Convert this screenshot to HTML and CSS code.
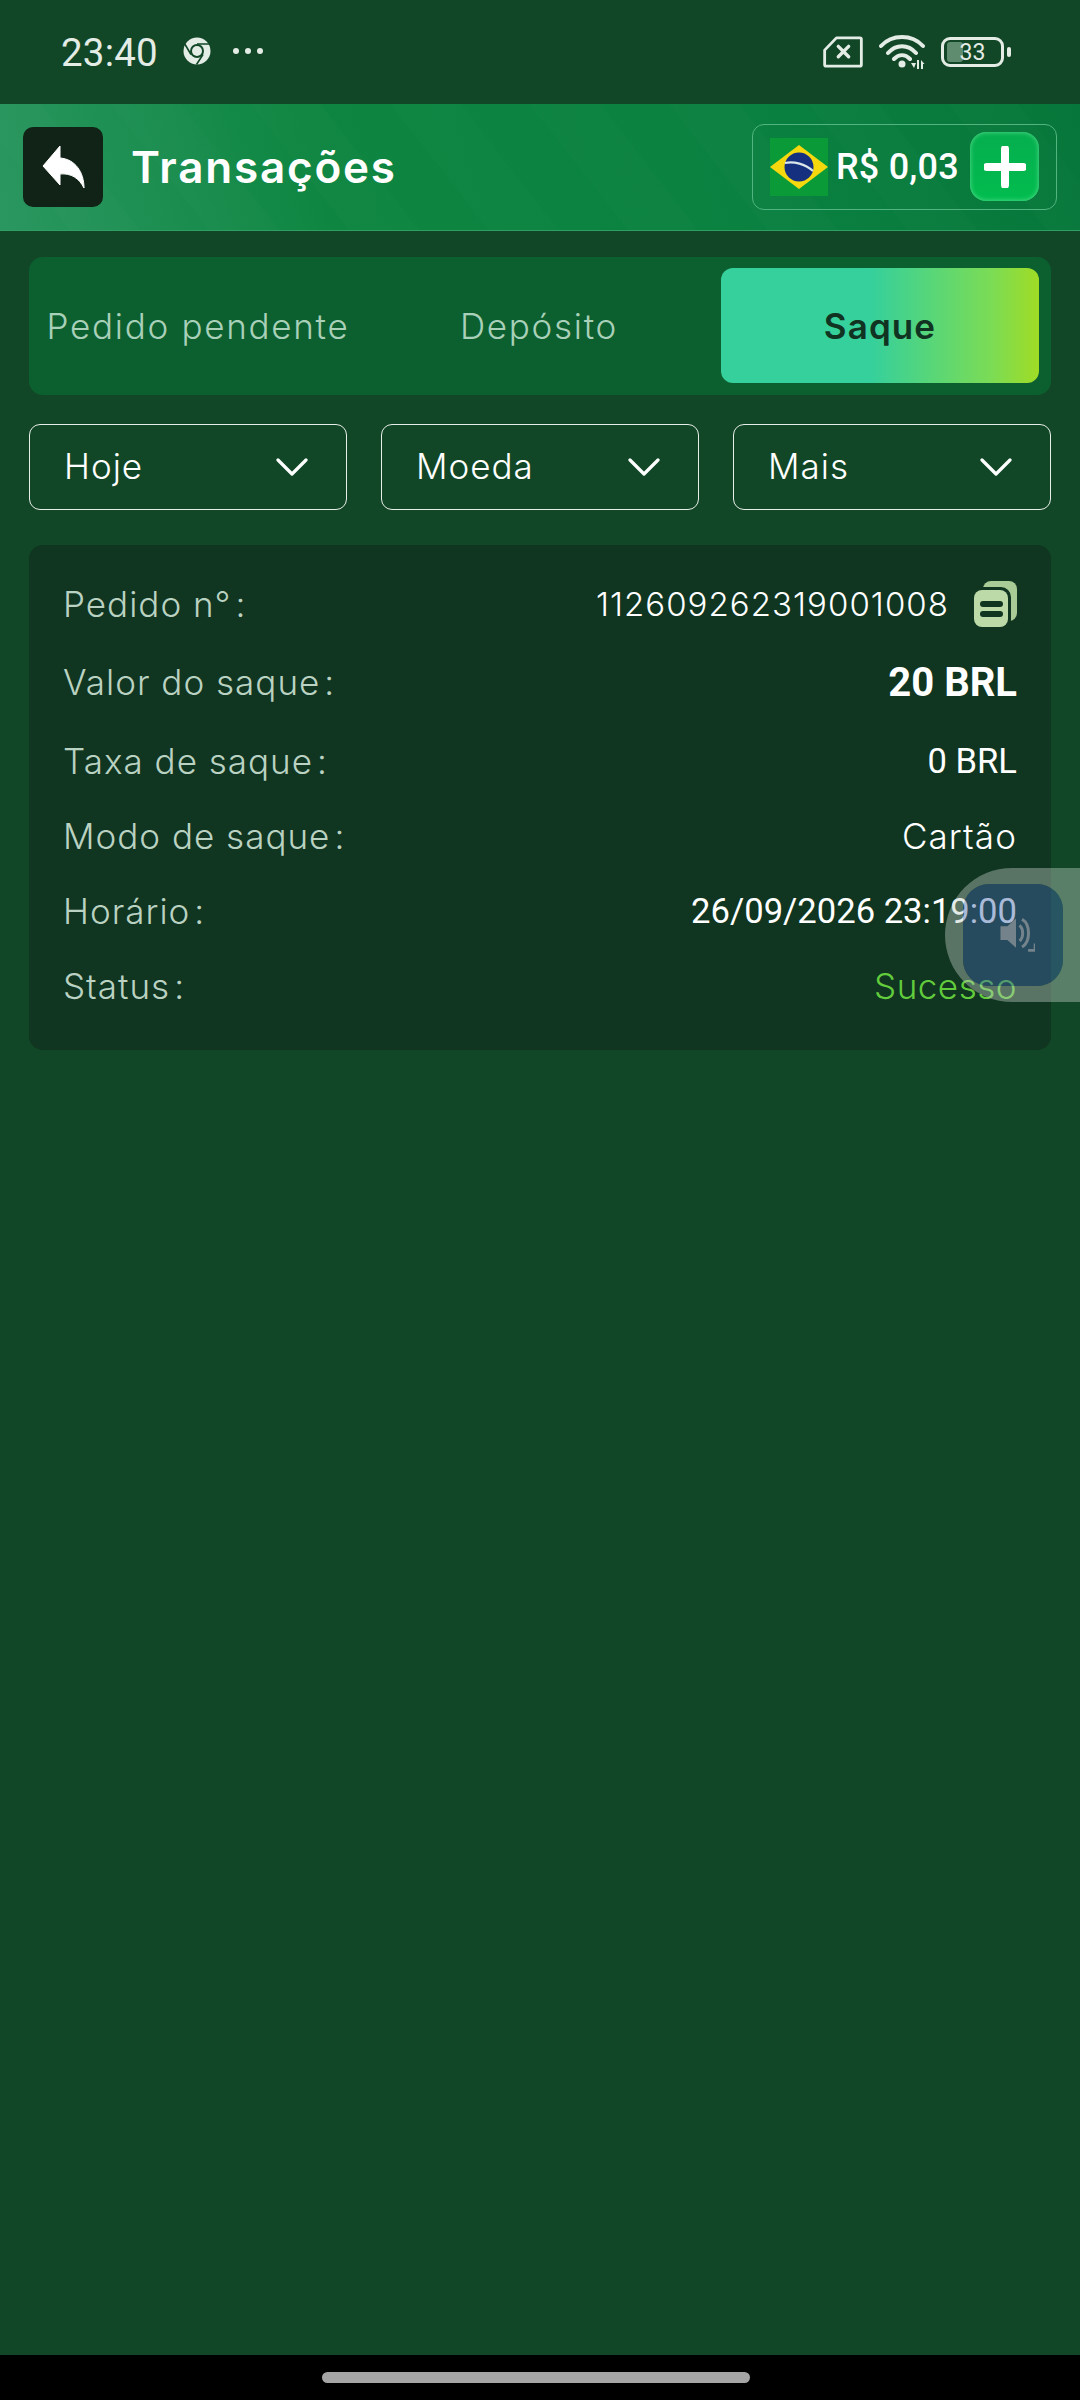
FILE: index.html
```html
<!DOCTYPE html>
<html lang="pt-BR">
<head>
<meta charset="utf-8">
<title>Transações</title>
<link rel="stylesheet" href="styles.css">
</head>
<body>
<div class="screen">
  <div class="statusbar">
    <div class="status-left">
      <span class="clock">23:40</span>
      <svg class="chrome" viewBox="0 0 28 28"><circle cx="14" cy="14" r="13.500" fill="#e4ece6"/><circle cx="14" cy="14" r="7" fill="#114726"/><circle cx="14" cy="14" r="5" fill="#e4ece6"/><path d="M14 7H27M8 17.500L1.500 6.500M20 17.500L13.500 27.500" stroke="#114726" stroke-width="1.600" fill="none"/></svg>
      <span class="dots"><i></i><i></i><i></i></span>
    </div>
    <div class="status-right">
      <svg class="sim" viewBox="0 0 42 34"><path d="M14 2H39a1.500 1.500 0 0 1 1.500 1.500V30.500A1.500 1.500 0 0 1 39 32H3a1.500 1.500 0 0 1-1.500-1.500V15Z" fill="none" stroke="#e4ece6" stroke-width="3" stroke-linejoin="round"/><path d="M16 11L27 22M27 11L16 22" stroke="#e4ece6" stroke-width="3.600" stroke-linecap="round"/></svg>
      <svg class="wifi" viewBox="0 0 46 36"><path d="M2 12C13 0 33 0 44 12M9 19C17 10 29 10 37 19M15 25C20 20 26 20 31 25" fill="none" stroke="#e4ece6" stroke-width="4" stroke-linecap="round"/><circle cx="23" cy="30" r="3.500" fill="#e4ece6"/><path d="M32 29L35 34L37 29ZM38 35V26H40V35ZM42 35V26L45.500 30H44V35Z" fill="#e4ece6"/></svg>
      <div class="battery"><div class="battery-fill"></div><span class="battery-num">33</span></div>
      <div class="battery-cap"></div>
    </div>
  </div>

  <header class="topbar">
    <div class="top-left">
      <button class="back">
        <svg viewBox="0 0 46 46"><path d="M20 2L3 22L20 41V30C31 29 39 34 44 44C44 28 35 15 20 14Z" fill="#fff" stroke="#fff" stroke-linejoin="round"/></svg>
      </button>
      <h1 class="title">Transações</h1>
    </div>
    <div class="wallet">
      <svg class="flag" viewBox="0 0 58 58"><rect width="58" height="58" fill="#0a9a38"/><path d="M29 7L58 29L29 51L0 29Z" fill="#f6d80f"/><circle cx="29" cy="29" r="14.500" fill="#15307f"/><path d="M15 25C24 23 35 26 43 33" stroke="#d9e6ea" stroke-width="2.200" fill="none"/></svg>
      <span class="amount">R$ 0,03</span>
      <button class="plus">
        <svg viewBox="0 0 42 42"><path d="M21 3V39M3 21H39" stroke="#fff" stroke-width="8" stroke-linecap="round"/></svg>
      </button>
    </div>
  </header>

  <main class="content">
    <nav class="tabs">
      <div class="tab">Pedido pendente</div>
      <div class="tab">Depósito</div>
      <div class="tab tab-active">Saque</div>
    </nav>

    <div class="filters">
      <div class="select"><span>Hoje</span><svg viewBox="0 0 32 20"><path d="M2 3L16 17L30 3" fill="none" stroke="#fff" stroke-width="3.200" stroke-linecap="round" stroke-linejoin="round"/></svg></div>
      <div class="select"><span>Moeda</span><svg viewBox="0 0 32 20"><path d="M2 3L16 17L30 3" fill="none" stroke="#fff" stroke-width="3.200" stroke-linecap="round" stroke-linejoin="round"/></svg></div>
      <div class="select"><span>Mais</span><svg viewBox="0 0 32 20"><path d="M2 3L16 17L30 3" fill="none" stroke="#fff" stroke-width="3.200" stroke-linecap="round" stroke-linejoin="round"/></svg></div>
    </div>

    <section class="card">
      <div class="row row-order"><span class="label">Pedido n°<span class="colon">:</span></span><span class="value order">112609262319001008<svg class="copy" viewBox="0 0 43 46"><rect x="9" y="0" width="34" height="40" rx="8" fill="#a9cb95"/><rect x="-3" y="6" width="40" height="43" rx="10" fill="#103520"/><rect x="0" y="9" width="34" height="37" rx="8" fill="#bcd9a8"/><rect x="6" y="20" width="23" height="6" rx="3" fill="#103520"/><rect x="6" y="30" width="23" height="6" rx="3" fill="#103520"/></svg></span></div>
      <div class="row row-amount"><span class="label">Valor do saque<span class="colon">:</span></span><span class="value strong">20 BRL</span></div>
      <div class="row row-fee"><span class="label">Taxa de saque<span class="colon">:</span></span><span class="value num">0 BRL</span></div>
      <div class="row row-mode"><span class="label">Modo de saque<span class="colon">:</span></span><span class="value text-val">Cartão</span></div>
      <div class="row row-time"><span class="label">Horário<span class="colon">:</span></span><span class="value num">26/09/2026 23:19:00</span></div>
      <div class="row row-status"><span class="label">Status<span class="colon">:</span></span><span class="value ok">Sucesso</span></div>
    </section>
  </main>

  <div class="navbar"><div class="handle"></div></div>

  <div class="float">
    <svg class="float-ring" viewBox="0 0 135 134"><path fill-rule="evenodd" d="M67 0H135V134H67A67 67 0 0 1 67 0ZM44 16A26 26 0 0 0 18 42V92A26 26 0 0 0 44 118H92A26 26 0 0 0 118 92V42A26 26 0 0 0 92 16Z" fill="#becdc3" fill-opacity=".42"/></svg>
    <div class="float-inner">
      <svg viewBox="0 0 44 44"><path d="M4 13H12L22 4V38L12 29H4Z" fill="#74838b"/><path d="M26 12C31 16 31 26 26 30M29 5C39 11 39 31 29 37" fill="none" stroke="#74838b" stroke-width="3.500"/><path d="M36 41H44V33" fill="none" stroke="#74838b" stroke-width="3"/></svg>
    </div>
  </div>
</div>
</body>
</html>
```

FILE: styles.css
```css
* { box-sizing: border-box; }
html, body { margin: 0; padding: 0; }
body { font-family: "Inter", "Open Sans", sans-serif; background: #114726; }
.screen { position: relative; width: 1080px; height: 2400px; overflow: hidden; background: #114726; display: flex; flex-direction: column; }

.statusbar { height: 104px; flex: none; background: #114726; display: flex; justify-content: space-between; padding: 0 69px 0 61px; align-items: flex-start; }
.status-left { display: flex; align-items: center; padding-top: 34px; height: 70px; }
.clock { font-family: "Roboto", sans-serif; font-size: 38.500px; color: #e4ece6; letter-spacing: .2px; line-height: 37px; }
.chrome { width: 28px; height: 28px; margin-left: 25px; margin-top: -2px; }
.dots { display: flex; gap: 6px; margin-left: 22px; margin-top: -2px; }
.dots i { width: 6px; height: 6px; border-radius: 50%; background: #e4ece6; display: block; }
.status-right { display: flex; align-items: center; padding-top: 34px; height: 70px; }
.sim { width: 40px; height: 32px; }
.wifi { width: 46px; height: 36px; margin-left: 16px; }
.battery { position: relative; width: 63px; height: 30px; margin-left: 16px; border: 3px solid #e4ece6; border-radius: 9px; display: flex; align-items: center; justify-content: center; overflow: hidden; }
.battery-fill { position: absolute; left: 3px; top: 2px; bottom: 2px; width: 16px; background: #5f8b6f; border-radius: 3px; }
.battery-num { position: relative; font-family: "Roboto", sans-serif; font-size: 23px; color: #e4ece6; }
.battery-cap { width: 4px; height: 10px; background: #e4ece6; margin-left: 3px; border-radius: 2px; }

.topbar { height: 127px; flex: none; display: flex; justify-content: space-between; align-items: center; padding: 0 23px; border-bottom: 1px solid #2fa064;
  background: repeating-linear-gradient(52deg, rgba(255,255,255,0) 0 55px, rgba(255,255,255,.012) 55px 110px), linear-gradient(75deg, #2a9760 0%, #0e8641 30%, #0a8140 70%, #07763a 100%); }
.top-left { display: flex; align-items: center; }
.back { width: 80px; height: 80px; padding: 0; background: #112316; border: 0; border-radius: 10px; display: flex; align-items: center; justify-content: center; margin-top: -1px; }
.back svg { width: 46px; height: 46px; }
.title { margin: 0 0 0 28px; font-size: 44px; font-weight: 600; color: #fff; letter-spacing: 1.800px; }
.wallet { width: 305px; height: 86px; border: 1px solid #52b57f; border-radius: 12px; display: flex; align-items: center; padding: 0 17px; margin-top: -1px; }
.flag { width: 58px; height: 58px; flex: none; }
.amount { font-family: "Roboto", sans-serif; font-weight: 500; font-size: 36px; color: #fff; margin-left: 8px; white-space: nowrap; letter-spacing: .2px; flex: 1; }
.plus { width: 69px; height: 69px; flex: none; border: 0; padding: 0; border-radius: 16px; background: linear-gradient(180deg,#05ae4e,#02bd4f); box-shadow: inset 0 0 5px #5ce093; display: flex; align-items: center; justify-content: center; }
.plus svg { width: 42px; height: 42px; }

.content { flex: 1; padding: 26px 29px 0; display: flex; flex-direction: column; }
.tabs { height: 138px; background: #0c6030; border-radius: 14px; display: grid; grid-template-columns: repeat(3, 318px); column-gap: 23px; padding: 11px 12px 12px 10px; }
.tab { display: flex; align-items: center; justify-content: center; font-size: 35px; font-weight: 300; color: #a9d0b8; letter-spacing: 1.700px; white-space: nowrap; }
.tab-active { background: linear-gradient(90deg,#35d09c 0%,#35d09c 47%,#7bdc55 85%,#a0dc25 100%); color: #113321; font-weight: 600; border-radius: 12px; letter-spacing: 1.100px; }

.filters { display: grid; grid-template-columns: repeat(3, 318px); justify-content: space-between; margin-top: 29px; }
.select { height: 86px; border: 1.500px solid #e7eee9; border-radius: 11px; display: flex; align-items: center; justify-content: space-between; padding: 0 38px 0 34px; font-size: 35px; font-weight: 300; color: #fff; letter-spacing: 1px; }
.select span { margin-top: -2px; }
.select svg { width: 32px; height: 20px; }

.card { position: relative; margin-top: 35px; height: 505px; background: #103520; border-radius: 14px; padding: 36px 34px 0; }
.row { display: flex; justify-content: space-between; align-items: center; height: 46px; }
.row-amount { margin-top: 32px; }
.row-fee { margin-top: 33px; }
.row-mode { margin-top: 29px; }
.row-time { margin-top: 29px; }
.row-status { margin-top: 29px; }
.label { font-size: 35px; font-weight: 300; color: #bad2c2; letter-spacing: 1px; white-space: nowrap; }
.colon { margin-left: 4px; }
.value { font-size: 35px; color: #fff; white-space: nowrap; }
.order { display: flex; align-items: center; font-size: 33px; font-weight: 300; letter-spacing: 1.050px; }
.copy { width: 43px; height: 46px; margin-left: 25px; }
.strong { font-family: "Roboto", sans-serif; font-weight: 700; font-size: 40px; }
.num { font-family: "Roboto", sans-serif; font-size: 34.600px; }
.text-val { font-weight: 300; letter-spacing: 1.100px; }
.ok { color: #62cc3c; font-weight: 300; letter-spacing: .5px; }

.navbar { height: 45px; flex: none; background: #000; display: flex; justify-content: center; padding-top: 17px; }
.handle { width: 428px; height: 11px; margin-right: 8px; border-radius: 6px; background: #a5a5a5; }

.float { position: absolute; left: 945px; top: 868px; width: 135px; height: 134px; }
.float-ring { position: absolute; left: 0; top: 0; width: 135px; height: 134px; }
.float-inner { position: absolute; left: 18px; top: 16px; width: 100px; height: 102px; border-radius: 26px; background: rgba(67,102,171,.45); display: flex; align-items: center; justify-content: center; }
.float-inner svg { width: 38px; height: 38px; margin-top: -2px; margin-left: 5px; }
```
